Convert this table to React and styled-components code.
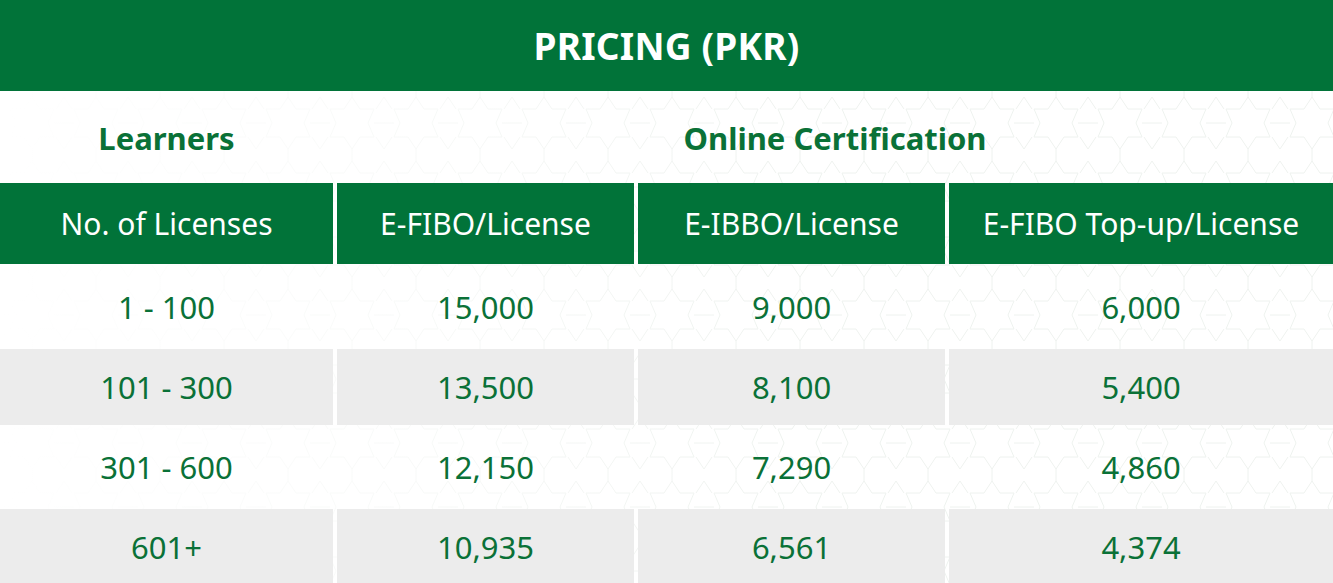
import React from "react";
import styled, { createGlobalStyle } from "styled-components";

const GlobalStyle = createGlobalStyle`
  body {
    margin: 0;
    background: #ffffff;
    font-family: "Noto Sans", "Open Sans", sans-serif;
  }
`;

const GREEN = "#017339";
const TEXT_GREEN = "#0a7137";

const patternSvg = encodeURIComponent(
  `<svg xmlns='http://www.w3.org/2000/svg' width='64' height='64' viewBox='0 0 64 64'>
    <g fill='none' stroke='#eef2ef' stroke-width='1'>
      <path d='M32 6 L40 18 L54 18 L48 32 L54 46 L40 46 L32 58 L24 46 L10 46 L16 32 L10 18 L24 18 Z'/>
      <path d='M0 6 L8 18 M64 6 L56 18 M0 58 L8 46 M64 58 L56 46'/>
      <path d='M32 6 L32 0 M32 58 L32 64 M10 32 L0 32 M54 32 L64 32'/>
    </g>
  </svg>`
);

const Page = styled.div`
  width: 1333px;
`;

const Title = styled.div`
  height: 91px;
  background: ${GREEN};
  color: #ffffff;
  display: flex;
  align-items: center;
  justify-content: center;
  font-size: 37px;
  font-weight: 700;
  letter-spacing: 0.2px;
`;

const Table = styled.div`
  display: grid;
  grid-template-columns: 333px 297px 307px 1fr;
  grid-template-rows: 88px 81px 77px 76px 76px 76px;
  gap: 4px;
  background-color: #ffffff;
  background-image: linear-gradient(
      to right,
      rgba(255, 255, 255, 1) 0%,
      rgba(255, 255, 255, 0.6) 30%,
      rgba(255, 255, 255, 0) 60%
    ),
    url("data:image/svg+xml,${patternSvg}");
`;

const GroupCell = styled.div`
  grid-column: ${(p) => p.$span || "auto"};
  display: flex;
  align-items: center;
  justify-content: center;
  color: ${TEXT_GREEN};
  font-size: 31px;
  font-weight: 700;
  padding-top: 6px;
`;

const HeadCell = styled.div`
  background: ${GREEN};
  color: #ffffff;
  display: flex;
  align-items: center;
  justify-content: center;
  font-size: 30px;
  font-weight: 400;
`;

const Cell = styled.div`
  background: ${(p) => (p.$shade ? "#ececec" : "transparent")};
  color: ${TEXT_GREEN};
  display: flex;
  align-items: center;
  justify-content: center;
  font-size: 31px;
  font-weight: 400;
`;

const headers = [
  "No. of Licenses",
  "E-FIBO/License",
  "E-IBBO/License",
  "E-FIBO Top-up/License",
];

const rows = [
  ["1 - 100", "15,000", "9,000", "6,000"],
  ["101 - 300", "13,500", "8,100", "5,400"],
  ["301 - 600", "12,150", "7,290", "4,860"],
  ["601+", "10,935", "6,561", "4,374"],
];

export default function App() {
  return (
    <Page>
      <GlobalStyle />
      <Title>PRICING (PKR)</Title>
      <Table>
        <GroupCell>Learners</GroupCell>
        <GroupCell $span="span 3">Online Certification</GroupCell>
        {headers.map((h) => (
          <HeadCell key={h}>{h}</HeadCell>
        ))}
        {rows.map((row, i) =>
          row.map((value, j) => (
            <Cell key={`${i}-${j}`} $shade={i % 2 === 1}>
              {value}
            </Cell>
          ))
        )}
      </Table>
    </Page>
  );
}
